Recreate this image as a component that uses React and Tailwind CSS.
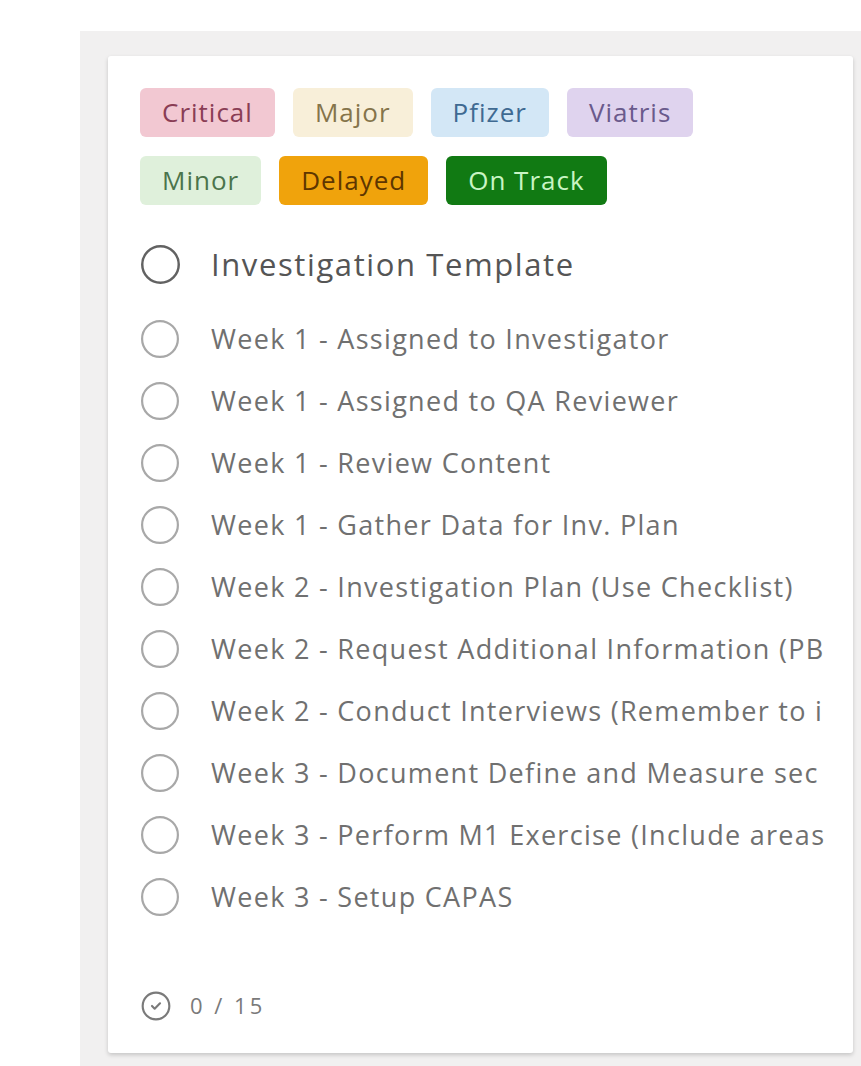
import { CircleCheck } from 'lucide-react';

const tags = [
  [
    { label: 'Critical', cls: 'bg-[#f2c8d2] text-[#8a3d55]' },
    { label: 'Major', cls: 'bg-[#f8efd9] text-[#85744a]' },
    { label: 'Pfizer', cls: 'bg-[#d3e7f6] text-[#3f6a92]' },
    { label: 'Viatris', cls: 'bg-[#dfd3ee] text-[#6a5a8c]' },
  ],
  [
    { label: 'Minor', cls: 'bg-[#dff0db] text-[#4b744b]' },
    { label: 'Delayed', cls: 'bg-[#f0a30c] text-[#5e3600]' },
    { label: 'On Track', cls: 'bg-[#117a13] text-[#c9f5c4]' },
  ],
];

// checklist rows, long titles are cut by the card edge
const items = [
  'Week 1 - Assigned to Investigator',
  'Week 1 - Assigned to QA Reviewer',
  'Week 1 - Review Content',
  'Week 1 - Gather Data for Inv. Plan',
  'Week 2 - Investigation Plan (Use Checklist)',
  'Week 2 - Request Additional Information (PB',
  'Week 2 - Conduct Interviews (Remember to i',
  'Week 3 - Document Define and Measure sec',
  'Week 3 - Perform M1 Exercise (Include areas',
  'Week 3 - Setup CAPAS',
];

function Tag({ label, cls }) {
  return (
    <span className={`h-[49px] px-[22px] rounded-md flex items-center text-[26px] tracking-[1px] ${cls}`}>
      {label}
    </span>
  );
}

function Circle({ size, color, stroke }) {
  return (
    <svg width={size} height={size} viewBox="0 0 40 40" className="shrink-0">
      <circle cx="20" cy="20" r={19 - stroke / 2} fill="none" stroke={color} strokeWidth={stroke} />
    </svg>
  );
}

export default function App() {
  return (
    <div className="min-h-screen bg-white pl-[80px] pt-[31px]" style={{ fontFamily: '"Open Sans", "Noto Sans", sans-serif' }}>
      <div className="h-[1035px] bg-[#f1f0f0] pl-[28px] pt-[25px]">
        <div className="w-[745px] h-[997px] bg-white rounded-[3px] shadow-[0_2px_4px_rgba(0,0,0,0.18)] pl-[32px] pr-[23px] pt-[32px] flex flex-col">
          <div className="flex flex-col gap-[19px]">
            {tags.map((row, i) => (
              <div key={i} className="flex gap-[18px]">
                {row.map((t) => (
                  <Tag key={t.label} {...t} />
                ))}
              </div>
            ))}
          </div>

          <div className="mt-[21px] h-[76px] flex items-center gap-[30px]">
            <Circle size={41} color="#626262" stroke={2.4} />
            <span className="text-[31px] text-[#555] tracking-[1.6px] whitespace-nowrap">Investigation Template</span>
          </div>

          <div className="mt-[6px] flex flex-col">
            {items.map((text) => (
              <div key={text} className="h-[62px] flex items-center gap-[31px]">
                <Circle size={40} color="#a8a8a8" stroke={2.2} />
                <span className="text-[27px] text-[#707070] tracking-[1.3px] whitespace-nowrap overflow-hidden">
                  {text}
                </span>
              </div>
            ))}
          </div>

          <div className="mt-auto pb-[31px] flex items-center gap-[18px] text-[#7a7a7a]">
            <CircleCheck size={32} strokeWidth={1.6} />
            <span className="text-[22px] tracking-[3px]">0 / 15</span>
          </div>
        </div>
      </div>
    </div>
  );
}
